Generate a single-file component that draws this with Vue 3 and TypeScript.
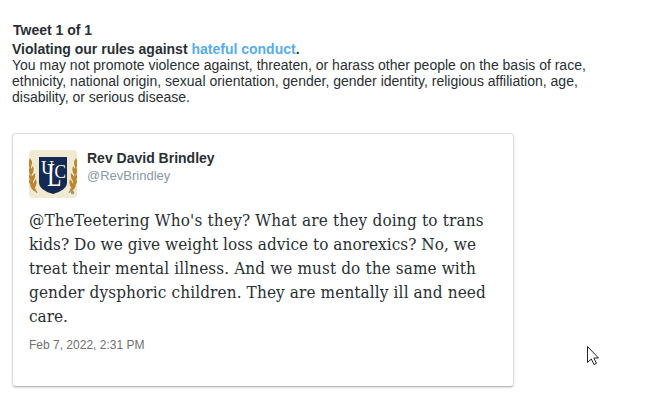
<template>
  <main class="notice">
    <section class="violation">
      <h1>Tweet 1 of 1</h1>
      <h2>Violating our rules against <a href="#">hateful conduct</a>.</h2>
      <p>
        <span v-for="line in policy" :key="line" class="line">{{ line }}</span>
      </p>
    </section>

    <article class="tweet">
      <header class="author">
        <svg class="avatar" viewBox="0 0 48 48">
          <rect width="48" height="48" fill="#f1ead2" />
          <g v-for="side in ['left', 'right']" :key="side" :transform="side === 'left' ? '' : 'translate(48 0) scale(-1 1)'" fill="#bd862f">
            <path d="M1 13Q1 31 8 43" fill="none" stroke="#a8742a" />
            <path d="M1 8Q5 13 1 18Q-2 14 1 8ZM-1 17Q4 20 2 25Q-1 23 -1 17ZM4 16Q6 22 2 25Q0 20 4 16ZM-1 23Q4 27 3 32Q-1 29 -1 23ZM6 23Q7 29 3 32Q1 27 6 23ZM-1 29Q5 32 5 38Q0 35 -1 29ZM7 29Q9 35 5 38Q3 33 7 29ZM1 35Q6 37 7 42Q2 40 1 35Z" />
          </g>
          <path d="M10 7H38V33Q38 40 24 44Q10 40 10 33Z" fill="#152a53" />
          <g class="monogram">
            <text x="12" y="23.5" font-size="19" textLength="13" lengthAdjust="spacingAndGlyphs">U</text>
            <text x="18" y="36" font-size="34" textLength="14.5" lengthAdjust="spacingAndGlyphs">L</text>
            <text x="25.5" y="27.5" font-size="19" textLength="11.5" lengthAdjust="spacingAndGlyphs">C</text>
          </g>
          <circle cx="43.5" cy="42.5" r="1.2" fill="#a9a58f" stroke="#777565" stroke-width=".8" />
        </svg>
        <div class="names">
          <strong>Rev David Brindley</strong>
          <span>@RevBrindley</span>
        </div>
      </header>

      <p class="message">
        <span v-for="line in message" :key="line.text" class="line" :style="{ letterSpacing: line.spacing }">{{ line.text }}</span>
      </p>
      <time datetime="2022-02-07T14:31">Feb 7, 2022, 2:31 PM</time>
    </article>

    <svg class="cursor" viewBox="0 0 13 21">
      <path d="M1.5 1.5V17.5L5.3 14L8 19.5L10.5 18.4L7.8 13H12.5Z" />
    </svg>
  </main>
</template>

<script setup lang="ts">
interface TextLine {
  text: string;
  spacing: string;
}

const policy: string[] = [
  'You may not promote violence against, threaten, or harass other people on the basis of race,',
  'ethnicity, national origin, sexual orientation, gender, gender identity, religious affiliation, age,',
  'disability, or serious disease.',
];

const message: TextLine[] = [
  { text: "@TheTeetering Who's they? What are they doing to trans", spacing: '0.18px' },
  { text: 'kids? Do we give weight loss advice to anorexics? No, we', spacing: '0.04px' },
  { text: 'treat their mental illness. And we must do the same with', spacing: '0.11px' },
  { text: 'gender dysphoric children. They are mentally ill and need', spacing: '0.12px' },
  { text: 'care.', spacing: '0' },
];
</script>

<style>
body {
  background: #fff;
}
</style>

<style scoped>
.notice {
  position: relative;
  box-sizing: border-box;
  height: 412px;
  padding: 22px 12px 0;
  overflow: hidden;
  color: #292f33;
  font-family: "Liberation Sans", Arial, sans-serif;
}

.violation {
  height: 111px;
}

h1,
h2,
p {
  margin: 0;
  font-size: 14px;
  line-height: 16px;
}

h1 {
  padding-left: 1px;
  margin-bottom: 3px;
}

a {
  color: #55acee;
  text-decoration: none;
}

.line {
  display: block;
  width: max-content;
  white-space: nowrap;
}

.tweet {
  box-sizing: border-box;
  width: 502px;
  height: 254px;
  padding: 16px;
  border: 1px solid #ddd;
  border-bottom-color: #bbb;
  border-radius: 4px;
  box-shadow: 0 1px 2px rgba(0, 0, 0, 0.15);
}

.author {
  display: flex;
  gap: 10px;
}

.avatar {
  width: 48px;
  height: 48px;
  border-radius: 4px;
}

.monogram {
  fill: #fff;
  font-family: "Liberation Serif", serif;
}

.names {
  display: flex;
  flex-direction: column;
}

.names strong {
  font-size: 14px;
  line-height: 17px;
}

.names span {
  color: #8899a6;
  font-size: 13px;
  line-height: 17px;
}

.message {
  margin-top: 10px;
  font-family: "DejaVu Serif Condensed", "DejaVu Serif", serif;
  font-stretch: condensed;
  font-size: 17px;
  line-height: 24px;
}

time {
  display: block;
  margin-top: 9px;
  color: #707070;
  font-size: 12px;
  line-height: 16px;
}

.cursor {
  position: absolute;
  top: 345px;
  left: 586px;
  width: 13px;
  height: 21px;
}

.cursor path {
  fill: #fff;
  stroke: #222;
  stroke-width: 1;
}
</style>
